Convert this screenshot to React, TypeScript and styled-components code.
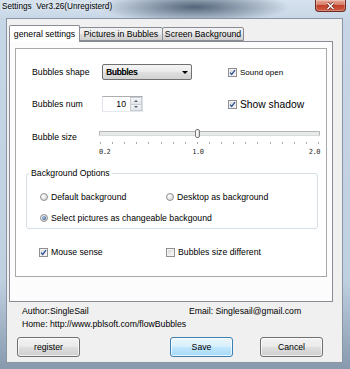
import React from 'react';
import styled, { createGlobalStyle } from 'styled-components';

const GlobalStyle = createGlobalStyle`
  html, body {
    margin: 0;
    padding: 0;
    background: #fff;
  }
  body {
    font-family: "Liberation Sans", Arial, sans-serif;
    font-size: 8.7px;
    color: #000;
  }
  * {
    box-sizing: border-box;
  }
`;

const Window = styled.div`
  width: 350px;
  height: 369px;
  display: flex;
  flex-direction: column;
  overflow: hidden;
  background:
    radial-gradient(ellipse 95px 16px at 195px 7px, rgba(62, 80, 102, 0.85), rgba(62, 80, 102, 0) 100%),
    linear-gradient(180deg, #d6e2ee 0px, #c7d6e6 20px, #bfd0e1 280px, #8799ad 369px);
`;

const TitleBar = styled.div`
  height: 18px;
  flex: none;
  display: flex;
  align-items: flex-start;
  justify-content: space-between;
`;

const TitleText = styled.span`
  font-size: 8.2px;
  line-height: 14px;
  padding-left: 2px;
  text-shadow: 0 0 5px rgba(255, 255, 255, 0.95);
`;

const CloseButton = styled.div`
  width: 31px;
  height: 12px;
  margin-right: 4px;
  display: flex;
  align-items: center;
  justify-content: center;
  border: 1px solid #6a2c24;
  border-top: none;
  border-radius: 0 0 4px 4px;
  background: linear-gradient(#e9a99a 0%, #d57b66 45%, #c3412b 50%, #cf5e45 100%);
  box-shadow: inset 0 0 0 1px rgba(255, 255, 255, 0.25);
`;

const Frame = styled.div`
  flex: 1;
  display: flex;
  padding: 0 7px 6px 6px;
`;

const Client = styled.div`
  flex: 1;
  display: flex;
  flex-direction: column;
  background: #f0f0f0;
  border: 1px solid rgba(70, 88, 110, 0.6);
`;

const TabStrip = styled.div`
  height: 22px;
  display: flex;
  align-items: flex-end;
  padding-left: 2px;
`;

const Tab = styled.div<{ $active?: boolean; $width: number }>`
  width: ${p => p.$width}px;
  height: ${p => (p.$active ? 17 : 14)}px;
  margin-bottom: ${p => (p.$active ? -1 : 0)}px;
  margin-left: ${p => (p.$active ? 0 : -1)}px;
  position: relative;
  z-index: ${p => (p.$active ? 1 : 0)};
  display: flex;
  align-items: center;
  justify-content: center;
  white-space: nowrap;
  border: 1px solid #898c95;
  border-bottom: ${p => (p.$active ? 'none' : '1px solid #898c95')};
  border-radius: 2px 2px 0 0;
  background: ${p =>
    p.$active ? '#fff' : 'linear-gradient(#f2f2f2 0%, #ebebeb 45%, #dddddd 55%, #cfcfcf 100%)'};
  padding-bottom: ${p => (p.$active ? 1 : 0)}px;
`;

const Panel = styled.div`
  margin-left: 2px;
  width: 324px;
  height: 261px;
  padding: 6px 0 0 5px;
  background: #fcfcfc;
  border: 1px solid #898c95;
`;

const InnerBox = styled.div`
  width: 312px;
  height: 229px;
  padding-top: 7px;
  background: #fff;
  border: 1px solid #a9a9a9;
`;

const FormRow = styled.div`
  display: grid;
  grid-template-columns: 70px 126px auto;
  align-items: center;
  height: 32px;
  padding-left: 16px;
`;

const FieldLabel = styled.span`
  white-space: nowrap;
`;

const Select = styled.div`
  width: 90px;
  height: 16px;
  display: flex;
  align-items: center;
  justify-content: space-between;
  padding: 0 3px 0 3px;
  border: 1px solid #707070;
  border-radius: 2px;
  background: linear-gradient(#f4f4f4 0%, #ececec 45%, #dedede 55%, #d2d2d2 100%);
`;

const SelectValue = styled.span`
  text-shadow: 0.4px 0 0 #000;
`;

const SelectArrow = styled.span`
  width: 0;
  height: 0;
  border-left: 3px solid transparent;
  border-right: 3px solid transparent;
  border-top: 3px solid #000;
`;

const Spin = styled.div`
  width: 41px;
  height: 16px;
  display: flex;
  background: #fff;
  border: 1px solid;
  border-color: #abadb3 #dbdfe6 #e3e9ef #e2e3ea;
`;

const SpinValue = styled.span`
  flex: 1;
  text-align: right;
  padding-right: 4px;
  line-height: 14px;
`;

const SpinButtons = styled.div`
  width: 12px;
  display: flex;
  flex-direction: column;
`;

const SpinButton = styled.div`
  flex: 1;
  display: flex;
  align-items: center;
  justify-content: center;
  border: 1px solid #c9ccd3;
  background: linear-gradient(#f6f6f6, #e3e5e8);
  & + & {
    border-top: none;
  }
`;

const SpinArrow = styled.span<{ $down?: boolean }>`
  width: 0;
  height: 0;
  border-left: 2.5px solid transparent;
  border-right: 2.5px solid transparent;
  border-top: ${p => (p.$down ? '2.5px solid #4a5d80' : 'none')};
  border-bottom: ${p => (p.$down ? 'none' : '2.5px solid #4a5d80')};
`;

const Option = styled.label<{ $size?: number }>`
  display: flex;
  align-items: center;
  gap: 3px;
  white-space: nowrap;
  font-size: ${p => p.$size ?? 8.7}px;
`;

const CheckBox = styled.span`
  width: 9px;
  height: 9px;
  flex: none;
  display: inline-flex;
  align-items: center;
  justify-content: center;
  border: 1px solid #8e8f8f;
  background: linear-gradient(135deg, #cfd3d8 0%, #eeeeee 60%, #fbfbfb 100%);
  box-shadow: inset 0 0 0 1px #f4f4f4;
`;

const RadioCircle = styled.span<{ $checked?: boolean }>`
  width: 8px;
  height: 8px;
  flex: none;
  display: inline-flex;
  align-items: center;
  justify-content: center;
  border-radius: 50%;
  border: 1px solid #8e8f8f;
  background: radial-gradient(circle at 35% 35%, #ffffff 0%, #e2e2e2 60%, #c9c9c9 100%);
  &::after {
    content: '';
    width: 4px;
    height: 4px;
    border-radius: 50%;
    background: ${p =>
      p.$checked ? 'radial-gradient(circle at 35% 35%, #b6cbe6 0%, #40679f 70%, #2a4a7c 100%)' : 'transparent'};
  }
`;

const SliderRow = styled.div`
  display: grid;
  grid-template-columns: 67px 221px;
  align-items: start;
  margin-top: 9px;
  padding-left: 16px;
`;

const SliderLabel = styled.span`
  line-height: 14px;
  padding-top: 1px;
`;

const Slider = styled.div`
  display: flex;
  flex-direction: column;
`;

const TrackArea = styled.div`
  height: 9px;
  position: relative;
  padding-top: 2px;
`;

const Track = styled.div`
  height: 5px;
  border: 1px solid #b7b7b7;
  border-bottom-color: #dadada;
  border-radius: 1px;
  background: #e7eaea;
`;

const Thumb = styled.div`
  position: absolute;
  top: 0;
  width: 5px;
  height: 9px;
  margin-left: -2px;
  border: 1px solid #7a7a7a;
  border-radius: 2px;
  background: linear-gradient(90deg, #ffffff, #dcdcdc);
`;

const Ticks = styled.div`
  height: 2px;
  margin-top: 4px;
  padding: 0 1px;
  display: flex;
  justify-content: space-between;
`;

const Tick = styled.span`
  width: 1px;
  height: 2px;
  background: #a8a8a8;
`;

const TickLabels = styled.div`
  position: relative;
  height: 10px;
  margin-top: 3px;
`;

const TickLabel = styled.span`
  position: absolute;
  top: 0;
  font-family: "DejaVu Sans Mono", "Liberation Mono", monospace;
  font-size: 7px;
  line-height: 10px;
  color: #2e2e2e;
  letter-spacing: -0.5px;
`;

const Group = styled.fieldset`
  margin: 11px 0 0 10px;
  width: 292px;
  min-width: 0;
  padding: 0;
  border: 1px solid #d5dfe5;
  border-radius: 3px;
`;

const GroupTitle = styled.legend`
  margin-left: 2px;
  padding: 0 2px;
  line-height: 10px;
  font-size: 8.7px;
`;

const OptionRow = styled.div<{ $first?: boolean; $col: number; $pad: number }>`
  display: grid;
  grid-template-columns: ${p => p.$col}px auto;
  align-items: center;
  height: 21px;
  margin-top: ${p => (p.$first ? 8 : 0)}px;
  padding-left: ${p => p.$pad}px;
`;

const CheckRow = styled(OptionRow)`
  height: 14px;
  margin-top: 16px;
`;

const Info = styled.div`
  display: grid;
  grid-template-columns: 167px auto;
  grid-auto-rows: 13px;
  align-items: center;
  margin-top: 2px;
  padding-left: 15px;
`;

const InfoWide = styled.span`
  grid-column: 1 / 3;
  white-space: nowrap;
`;

const ButtonBar = styled.div`
  display: flex;
  margin-top: 7px;
  padding-left: 10px;
`;

const Button = styled.button<{ $primary?: boolean; $space?: number }>`
  width: 63px;
  height: 20px;
  margin: 0 0 0 ${p => p.$space ?? 0}px;
  padding: 0;
  font: inherit;
  color: #000;
  border: 1px solid ${p => (p.$primary ? '#3c7fb1' : '#707070')};
  border-radius: 3px;
  background: ${p =>
    p.$primary
      ? 'linear-gradient(#eaf6fd 0%, #d9f0fc 45%, #bee6fd 55%, #a7d9f5 100%)'
      : 'linear-gradient(#f2f2f2 0%, #ebebeb 45%, #dddddd 55%, #cfcfcf 100%)'};
  box-shadow: inset 0 0 0 1px rgba(255, 255, 255, 0.7);
`;

function Check({ checked }: { checked?: boolean }) {
  return (
    <CheckBox>
      {checked ? (
        <svg width="7" height="7" viewBox="0 0 7 7">
          <path d="M1 3.6 L2.7 5.4 L6 1.2" fill="none" stroke="#2c4f95" strokeWidth="1.3" />
        </svg>
      ) : null}
    </CheckBox>
  );
}

const sizeMin = 0.2;
const sizeMax = 2.0;
const sizeValue = 1.0;
const tickCount = 19;

function pos(v: number) {
  return (v - sizeMin) / (sizeMax - sizeMin);
}

export default function App() {
  const thumbAt = pos(sizeValue) * 100;
  const labels = [0.2, 1.0, 2.0];

  return (
    <>
      <GlobalStyle />
      <Window>
        <TitleBar>
          <TitleText>Settings&nbsp;&nbsp;Ver3.26(Unregisterd)</TitleText>
          <CloseButton>
            <svg width="9" height="8" viewBox="0 0 9 8">
              <path d="M1.5 1 L7.5 7 M7.5 1 L1.5 7" stroke="#5a1e16" strokeWidth="2.6" />
              <path d="M1.5 1 L7.5 7 M7.5 1 L1.5 7" stroke="#fff" strokeWidth="1.5" />
            </svg>
          </CloseButton>
        </TitleBar>
        <Frame>
          <Client>
            <TabStrip>
              <Tab $active $width={71}>general settings</Tab>
              <Tab $width={84}>Pictures in Bubbles</Tab>
              <Tab $width={82}>Screen Background</Tab>
            </TabStrip>
            <Panel>
              <InnerBox>
                <FormRow>
                  <FieldLabel>Bubbles shape</FieldLabel>
                  <Select>
                    <SelectValue>Bubbles</SelectValue>
                    <SelectArrow />
                  </Select>
                  <Option $size={8}>
                    <Check checked />
                    Sound open
                  </Option>
                </FormRow>
                <FormRow>
                  <FieldLabel>Bubbles num</FieldLabel>
                  <Spin>
                    <SpinValue>10</SpinValue>
                    <SpinButtons>
                      <SpinButton>
                        <SpinArrow />
                      </SpinButton>
                      <SpinButton>
                        <SpinArrow $down />
                      </SpinButton>
                    </SpinButtons>
                  </Spin>
                  <Option $size={10.3}>
                    <Check checked />
                    Show shadow
                  </Option>
                </FormRow>
                <SliderRow>
                  <SliderLabel>Bubble size</SliderLabel>
                  <Slider>
                    <TrackArea>
                      <Track />
                      <Thumb style={{ left: `${thumbAt}%` }} />
                    </TrackArea>
                    <Ticks>
                      {Array.from({ length: tickCount }, (_, i) => (
                        <Tick key={i} />
                      ))}
                    </Ticks>
                    <TickLabels>
                      {labels.map(v => {
                        const p = pos(v) * 100;
                        return (
                          <TickLabel key={v} style={{ left: `${p}%`, transform: `translateX(-${p}%)` }}>
                            {v.toFixed(1)}
                          </TickLabel>
                        );
                      })}
                    </TickLabels>
                  </Slider>
                </SliderRow>
                <Group>
                  <GroupTitle>Background Options</GroupTitle>
                  <OptionRow $first $col={126} $pad={13}>
                    <Option>
                      <RadioCircle />
                      Default background
                    </Option>
                    <Option>
                      <RadioCircle />
                      Desktop as background
                    </Option>
                  </OptionRow>
                  <OptionRow $col={126} $pad={13}>
                    <Option>
                      <RadioCircle $checked />
                      Select pictures as changeable backgound
                    </Option>
                  </OptionRow>
                </Group>
                <CheckRow $col={127} $pad={23}>
                  <Option>
                    <Check checked />
                    Mouse sense
                  </Option>
                  <Option>
                    <Check />
                    Bubbles size different
                  </Option>
                </CheckRow>
              </InnerBox>
            </Panel>
            <Info>
              <span>Author:SingleSail</span>
              <span>Email: Singlesail@gmail.com</span>
              <InfoWide>Home: http://www.pblsoft.com/flowBubbles</InfoWide>
            </Info>
            <ButtonBar>
              <Button>register</Button>
              <Button $primary $space={90}>
                Save
              </Button>
              <Button $space={27}>Cancel</Button>
            </ButtonBar>
          </Client>
        </Frame>
      </Window>
    </>
  );
}
